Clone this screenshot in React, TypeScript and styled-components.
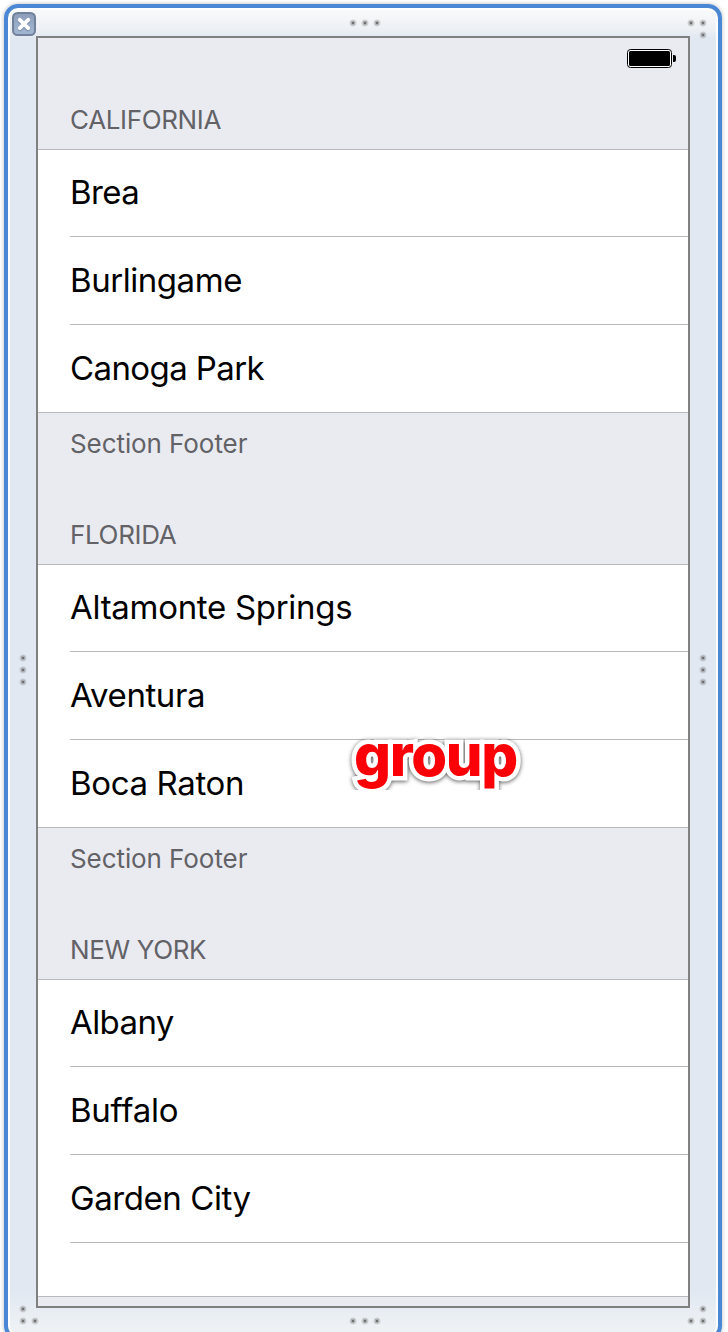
import React from 'react';
import styled, { createGlobalStyle } from 'styled-components';

const GlobalStyle = createGlobalStyle`
  * { box-sizing: border-box; }
  html, body { margin: 0; background: #fff; overflow: hidden; }
`;

const Page = styled.main`
  position: relative;
  height: 1332px;
  padding: 4px 6px 0 4px;
  overflow: hidden;
  font-family: Inter, "Liberation Sans", sans-serif;
`;

const Canvas = styled.div`
  display: grid;
  grid-template-columns: 28px 654px 28px;
  grid-template-rows: 28px 1272px 28px;
  height: 1336px;
  border: 4px solid #4a87d4;
  border-radius: 14px;
  box-shadow: 0 0 4px rgba(0, 0, 0, 0.28), inset 0 0 0 2px #fff;
  background: linear-gradient(#f9fafb 2px, #ecf0f4 22px, #e1e8f1 30px, #e1e8f1 1282px, #eef2f5 1322px);
`;

const TopEdge = styled.div`
  grid-column: 1 / -1;
  display: flex;
  justify-content: space-between;
  align-items: flex-start;
  padding: 3px 11px 0 3px;
`;

const BottomEdge = styled.div`
  grid-column: 1 / -1;
  display: flex;
  justify-content: space-between;
  align-items: flex-end;
  padding: 0 11px 11px;
`;

const LeftEdge = styled.div`
  display: flex;
  align-items: center;
  justify-content: center;
  padding: 0 0 4px 2px;
`;

const RightEdge = styled(LeftEdge)`
  padding: 0 2px 4px 0;
`;

const GripSvg = styled.svg`
  flex: none;
  display: block;
  overflow: visible;

  ${TopEdge} & { margin-top: 8px; }
  ${TopEdge} &:nth-child(2) { margin-left: 6px; }
  ${BottomEdge} &:nth-child(2) { margin-left: 4px; }
`;

const Screen = styled.section`
  border: 2px solid #808080;
  background: #eaebf1;
  overflow: hidden;
`;

const StatusBar = styled.div`
  display: flex;
  justify-content: flex-end;
  height: 40px;
  padding: 11px 11px 0;
`;

const Header = styled.h2<{ $first?: boolean }>`
  display: flex;
  align-items: flex-end;
  height: ${p => (p.$first ? 71 : 91)}px;
  margin: 0;
  padding: 0 32px 13px;
  font-size: 26px;
  line-height: 32px;
  font-weight: 400;
  letter-spacing: -0.35px;
  color: #626267;
`;

const Footer = styled.p`
  margin: 0;
  height: 60px;
  padding: 15px 32px 0;
  font-size: 26px;
  line-height: 32px;
  letter-spacing: -0.08px;
  color: #626267;
`;

const Rows = styled.ul`
  display: flex;
  flex-direction: column;
  list-style: none;
  margin: 0;
  padding: 0 0 0 32px;
  background: #fff;
  border-top: 1px solid #bab9be;
  border-bottom: 1px solid #bab9be;
`;

const Row = styled.li<{ $tracking: number }>`
  display: flex;
  align-items: center;
  height: 88px;
  padding-bottom: 1px;
  font-size: 33px;
  line-height: 40px;
  letter-spacing: ${p => p.$tracking}px;
  color: #000;
  border-bottom: 1px solid #bab9be;

  &:first-child { height: 87px; padding-bottom: 2px; }
  &:last-child { height: 87px; border-bottom: 0; }
  &:empty { height: 53px; }
`;

const CalloutClip = styled.div`
  position: absolute;
  left: 340px;
  top: 725px;
  width: 200px;
  height: 65px;
  overflow: hidden;
`;

const Callout = styled.div`
  padding-left: 14px;
  margin-top: -3px;
  font: 800 58px/66px Inter, "Liberation Sans", sans-serif;
  letter-spacing: -1.3px;
  color: #fb0007;
  -webkit-text-stroke: 9px #fff;
  paint-order: stroke fill;
  filter: drop-shadow(0 1px 2px rgba(0, 0, 0, 0.65));
`;

type Dot = [number, number];

const Grip = ({ dots }: { dots: Dot[] }) => {
  const width = Math.max(...dots.map(d => d[0])) * 12 + 8;
  const height = Math.max(...dots.map(d => d[1])) * 12 + 8;
  return (
    <GripSvg width={width} height={height} viewBox={`0 0 ${width} ${height}`}>
      {dots.map(([cx, cy]) => (
        <g key={`${cx}-${cy}`} transform={`translate(${cx * 12 + 4} ${cy * 12 + 4})`}>
          <circle r="3.5" fill="#777" opacity="0.22" />
          <circle r="2.4" fill="#777" opacity="0.42" />
          <rect x="-1" y="-1" width="2" height="2" fill="#707070" />
        </g>
      ))}
    </GripSvg>
  );
};

const horizontal: Dot[] = [[0, 0], [1, 0], [2, 0]];
const vertical: Dot[] = [[0, 0], [0, 1], [0, 2]];

const Battery = () => (
  <svg width="50" height="20" viewBox="0 0 50 20">
    <rect x="0.5" y="0.5" width="44" height="18" rx="3" fill="#fff" stroke="#000" />
    <rect x="2" y="2" width="41" height="15" rx="1.5" />
    <path d="M46 6h1a2 2 0 0 1 2 2v3a2 2 0 0 1-2 2h-1z" />
  </svg>
);

const CloseButton = () => (
  <svg width="26" height="26" viewBox="0 0 26 26">
    <defs>
      <linearGradient id="close" x2="0" y2="1">
        <stop stopColor="#8c9dba" />
        <stop offset="1" stopColor="#a3b8d3" />
      </linearGradient>
    </defs>
    <rect x="2" y="2" width="22" height="22" rx="4.5" fill="url(#close)" stroke="#71819c" strokeWidth="2" />
    <path d="M9 10l8 8M17 10l-8 8" stroke="#63779a" strokeWidth="4.6" strokeLinecap="round" opacity="0.5" />
    <path d="M8.8 8.8l8.4 8.4M17.2 8.8l-8.4 8.4" stroke="#fff" strokeWidth="3.8" strokeLinecap="round" />
  </svg>
);

const sections: { title: string; rows: [string, number][]; footer?: string }[] = [
  { title: 'CALIFORNIA', rows: [['Brea', -0.6], ['Burlingame', -0.45], ['Canoga Park', -0.6]], footer: 'Section Footer' },
  { title: 'FLORIDA', rows: [['Altamonte Springs', -0.3], ['Aventura', -0.42], ['Boca Raton', -0.36]], footer: 'Section Footer' },
  { title: 'NEW YORK', rows: [['Albany', -0.6], ['Buffalo', -0.25], ['Garden City', -0.42], ['', 0]] },
];

export default function App() {
  return (
    <>
      <GlobalStyle />
      <Page>
        <Canvas>
          <TopEdge>
            <CloseButton />
            <Grip dots={horizontal} />
            <Grip dots={[[0, 0], [1, 0], [1, 1]]} />
          </TopEdge>
          <LeftEdge>
            <Grip dots={vertical} />
          </LeftEdge>
          <Screen>
            <StatusBar>
              <Battery />
            </StatusBar>
            {sections.map((s, i) => (
              <React.Fragment key={s.title}>
                <Header $first={i === 0}>{s.title}</Header>
                <Rows>
                  {s.rows.map(([name, tracking]) => (
                    <Row key={name} $tracking={tracking}>{name || null}</Row>
                  ))}
                </Rows>
                {s.footer && <Footer>{s.footer}</Footer>}
              </React.Fragment>
            ))}
          </Screen>
          <RightEdge>
            <Grip dots={vertical} />
          </RightEdge>
          <BottomEdge>
            <Grip dots={[[0, 0], [0, 1], [1, 1]]} />
            <Grip dots={horizontal} />
            <Grip dots={[[1, 0], [0, 1], [1, 1]]} />
          </BottomEdge>
        </Canvas>
        <CalloutClip>
          <Callout>group</Callout>
        </CalloutClip>
      </Page>
    </>
  );
}
